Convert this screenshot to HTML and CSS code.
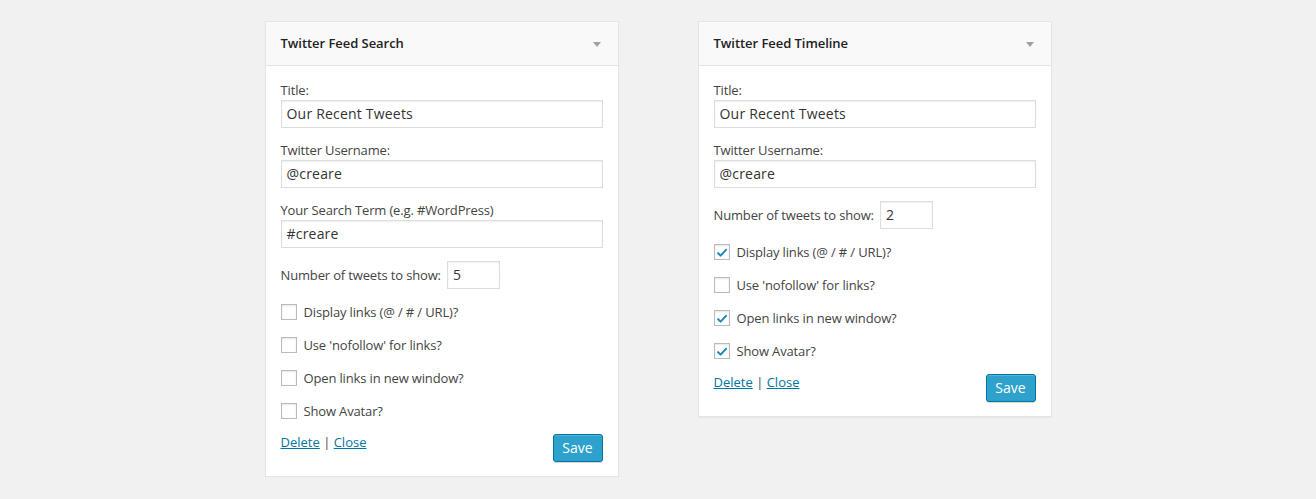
FILE: index.html
```html
<!DOCTYPE html>
<html>
<head>
<meta charset="utf-8">
<link rel="stylesheet" href="styles.css">
</head>
<body>
<div class="stage">
  <div class="widget">
    <div class="widget-top">
      <h4 class="widget-title">Twitter Feed Search</h4>
      <span class="arrow"></span>
    </div>
    <div class="widget-inside">
      <div class="field">
        <label class="lbl">Title:</label>
        <div class="input">Our Recent Tweets</div>
      </div>
      <div class="field">
        <label class="lbl">Twitter Username:</label>
        <div class="input">@creare</div>
      </div>
      <div class="field">
        <label class="lbl">Your Search Term (e.g. #WordPress)</label>
        <div class="input">#creare</div>
      </div>
      <div class="num-row">
        <span class="lbl">Number of tweets to show:</span>
        <div class="input small">5</div>
      </div>
      <div class="check"><span class="box"></span><span class="lbl">Display links (@ / # / URL)?</span></div>
      <div class="check"><span class="box"></span><span class="lbl">Use 'nofollow' for links?</span></div>
      <div class="check"><span class="box"></span><span class="lbl">Open links in new window?</span></div>
      <div class="check"><span class="box"></span><span class="lbl">Show Avatar?</span></div>
      <div class="controls">
        <div class="links"><a href="#">Delete</a> | <a href="#">Close</a></div>
        <button class="save">Save</button>
      </div>
    </div>
  </div>

  <div class="widget">
    <div class="widget-top">
      <h4 class="widget-title">Twitter Feed Timeline</h4>
      <span class="arrow"></span>
    </div>
    <div class="widget-inside">
      <div class="field">
        <label class="lbl">Title:</label>
        <div class="input">Our Recent Tweets</div>
      </div>
      <div class="field">
        <label class="lbl">Twitter Username:</label>
        <div class="input">@creare</div>
      </div>
      <div class="num-row">
        <span class="lbl">Number of tweets to show:</span>
        <div class="input small">2</div>
      </div>
      <div class="check"><span class="box checked"><svg viewBox="0 0 16 16" width="16" height="16"><path d="M3.6 8.2 L6.4 11 L12.6 4.4" fill="none" stroke="#1e8cbe" stroke-width="2.4" stroke-linecap="round" stroke-linejoin="round"/></svg></span><span class="lbl">Display links (@ / # / URL)?</span></div>
      <div class="check"><span class="box"></span><span class="lbl">Use 'nofollow' for links?</span></div>
      <div class="check"><span class="box checked"><svg viewBox="0 0 16 16" width="16" height="16"><path d="M3.6 8.2 L6.4 11 L12.6 4.4" fill="none" stroke="#1e8cbe" stroke-width="2.4" stroke-linecap="round" stroke-linejoin="round"/></svg></span><span class="lbl">Open links in new window?</span></div>
      <div class="check"><span class="box checked"><svg viewBox="0 0 16 16" width="16" height="16"><path d="M3.6 8.2 L6.4 11 L12.6 4.4" fill="none" stroke="#1e8cbe" stroke-width="2.4" stroke-linecap="round" stroke-linejoin="round"/></svg></span><span class="lbl">Show Avatar?</span></div>
      <div class="controls">
        <div class="links"><a href="#">Delete</a> | <a href="#">Close</a></div>
        <button class="save">Save</button>
      </div>
    </div>
  </div>
</div>
</body>
</html>
```

FILE: styles.css
```css
html, body {
  margin: 0;
  padding: 0;
  background: #f1f1f1;
}
body {
  font-family: "Open Sans", "Liberation Sans", sans-serif;
  color: #444;
  font-size: 13px;
}
.stage {
  display: flex;
  justify-content: center;
  align-items: flex-start;
  gap: 79px;
  padding-top: 21px;
}
.widget {
  width: 352px;
  background: #fff;
  border: 1px solid #e5e5e5;
  box-shadow: 0 1px 1px rgba(0,0,0,0.04);
}
.widget-top {
  height: 43px;
  background: #f9f9f9;
  border-bottom: 1px solid #e5e5e5;
  display: flex;
  align-items: center;
  justify-content: space-between;
  padding: 0 17px 1px 15px;
  box-sizing: border-box;
  height: 44px;
}
.widget-title {
  margin: 0;
  font-size: 13px;
  font-weight: 600;
  color: #222;
  letter-spacing: -0.05px;
}
.arrow {
  width: 0;
  height: 0;
  border-left: 4px solid transparent;
  border-right: 4px solid transparent;
  border-top: 5px solid #a0a0a0;
  margin-top: 3px;
}
.widget-inside {
  padding: 14px 15px 14px;
}
.lbl {
  display: block;
  line-height: 20px;
  font-size: 13px;
  color: #444;
  letter-spacing: -0.15px;
}
.field {
  margin-bottom: 12px;
}
.input {
  box-sizing: border-box;
  height: 28px;
  border: 1px solid #ddd;
  box-shadow: inset 0 1px 2px rgba(0,0,0,0.07);
  background: #fff;
  font-size: 14px;
  line-height: 26px;
  padding: 0 5px;
  color: #333;
  letter-spacing: 0.2px;
}
.num-row {
  display: flex;
  align-items: center;
  gap: 6px;
  margin-top: 13px;
}
.field:has(+ .num-row) {
  margin-bottom: 0;
}
.input.small {
  width: 53px;
}
.check {
  display: flex;
  align-items: center;
  gap: 7px;
  margin-top: 13px;
  height: 20px;
}
.box {
  box-sizing: border-box;
  width: 16px;
  height: 16px;
  border: 1px solid #bbb;
  background: #fff;
  box-shadow: inset 0 1px 2px rgba(0,0,0,0.1);
  display: flex;
  align-items: center;
  justify-content: center;
  flex: none;
}
.box svg {
  display: block;
  margin-top: 1px;
}
.controls {
  display: flex;
  justify-content: space-between;
  align-items: flex-start;
  margin-top: 13px;
}
.links {
  line-height: 16px;
  font-size: 13px;
  color: #444;
}
.links a {
  color: #0074a2;
  text-decoration: underline;
}
.save {
  box-sizing: border-box;
  height: 28px;
  width: 50px;
  padding: 0;
  background: #2ea2cc;
  border: 1px solid #0074a2;
  border-radius: 3px;
  box-shadow: inset 0 1px 0 rgba(120,200,230,0.5), 0 1px 0 rgba(0,0,0,0.15);
  color: #fff;
  font-family: "Open Sans", "Liberation Sans", sans-serif;
  font-size: 14px;
  line-height: 26px;
}
```
